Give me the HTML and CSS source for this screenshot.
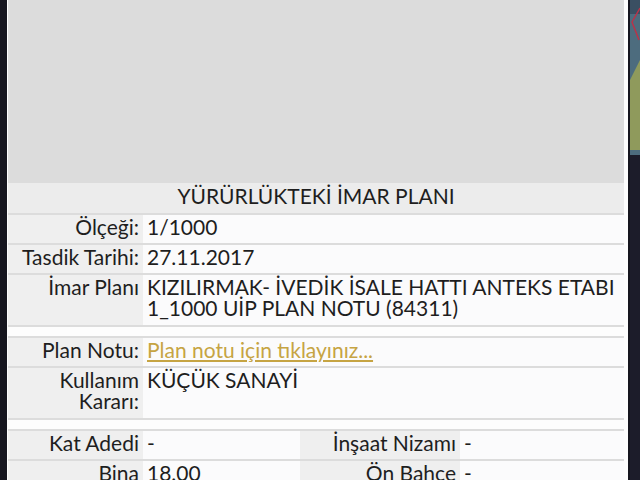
FILE: index.html
```html
<!DOCTYPE html>
<html lang="tr">
<head>
    <meta charset="UTF-8">
    <title>Yürürlükteki İmar Planı</title>
    <link rel="stylesheet" href="styles.css">
</head>
<body>
    <div class="screen">
        <div class="panel">
            <div class="preview"></div>
            <table class="plan">
                <colgroup>
                    <col class="col-label">
                    <col class="col-value">
                    <col class="col-label2">
                    <col>
                </colgroup>
                <tr>
                    <th colspan="4" class="title">YÜRÜRLÜKTEKİ İMAR PLANI</th>
                </tr>
                <tr>
                    <td class="label">Ölçeği:</td>
                    <td class="value" colspan="3">1/1000</td>
                </tr>
                <tr>
                    <td class="label">Tasdik Tarihi:</td>
                    <td class="value" colspan="3">27.11.2017</td>
                </tr>
                <tr class="tall">
                    <td class="label">İmar Planı</td>
                    <td class="value" colspan="3">KIZILIRMAK- İVEDİK İSALE HATTI ANTEKS ETABI 1_1000 UİP PLAN NOTU (84311)</td>
                </tr>
                <tr class="spacer"><td colspan="4"></td></tr>
                <tr>
                    <td class="label">Plan Notu:</td>
                    <td class="value" colspan="3"><a href="#">Plan notu için tıklayınız...</a></td>
                </tr>
                <tr class="tall">
                    <td class="label">Kullanım Kararı:</td>
                    <td class="value" colspan="3">KÜÇÜK SANAYİ</td>
                </tr>
                <tr class="spacer"><td colspan="4"></td></tr>
                <tr>
                    <td class="label">Kat Adedi</td>
                    <td class="value">-</td>
                    <td class="label">İnşaat Nizamı</td>
                    <td class="value">-</td>
                </tr>
                <tr>
                    <td class="label">Bina</td>
                    <td class="value">18.00</td>
                    <td class="label">Ön Bahce</td>
                    <td class="value">-</td>
                </tr>
            </table>
        </div>
        <div class="map">
            <svg width="10" height="480" viewBox="0 0 10 480">
                <rect x="0" y="0" width="10" height="155" fill="#4d6c7e"/>
                <rect x="0" y="0" width="10" height="14" fill="#3a4f62"/>
                <polygon points="0,80 10,60 10,150 0,150" fill="#8f9a5c"/>
                <polyline points="10,8 2,22 9,40" fill="none" stroke="#b8344a" stroke-width="1.5"/>
                <rect x="0" y="155" width="10" height="325" fill="#1c1c2a"/>
            </svg>
        </div>
    </div>
</body>
</html>
```

FILE: styles.css
```css
body {
    margin: 0;
    padding: 0;
    background-color: #16161f; /* тёмная рамка экрана */
    font-family: 'Lato', 'Noto Sans', sans-serif;
    color: #1e1e1e;
    overflow: hidden;
}

.screen {
    display: flex;
    height: 480px;
    padding-left: 7px;
    gap: 2px;
}

.panel {
    width: 617px;
    padding: 0 4px 0 1px;
    background-color: #fdfdfd;
    height: 480px;
    overflow: hidden;
}

.preview {
    height: 183px;
    background-color: #dcdcdc;
}

.plan {
    width: 616px;
    border-collapse: collapse;
    table-layout: fixed;
    font-size: 21px;
    line-height: 21px;
}

.col-label {
    width: 135px;
}

.col-value {
    width: 157px;
}

.col-label2 {
    width: 160px;
}

.plan th,
.plan td {
    padding: 1px 0 6px;
    border-bottom: 2px solid #dcdcdc;
    vertical-align: top;
}

.plan .tall td {
    padding-bottom: 7px;
}

.plan .title {
    font-weight: normal;
    text-align: center;
    background-color: #ececec;
    padding: 2px 0 7px;
}

.label {
    padding-right: 4px !important;
    text-align: right;
    background-color: #efefef;
}

.value {
    padding-left: 4px !important;
    background-color: #fbfbfc;
}

.plan .spacer td {
    height: 9px;
    padding: 0;
    background-color: #fdfdfd;
}

a {
    color: #c6a443;
    text-decoration: underline;
}

.map {
    width: 10px;
}
```
